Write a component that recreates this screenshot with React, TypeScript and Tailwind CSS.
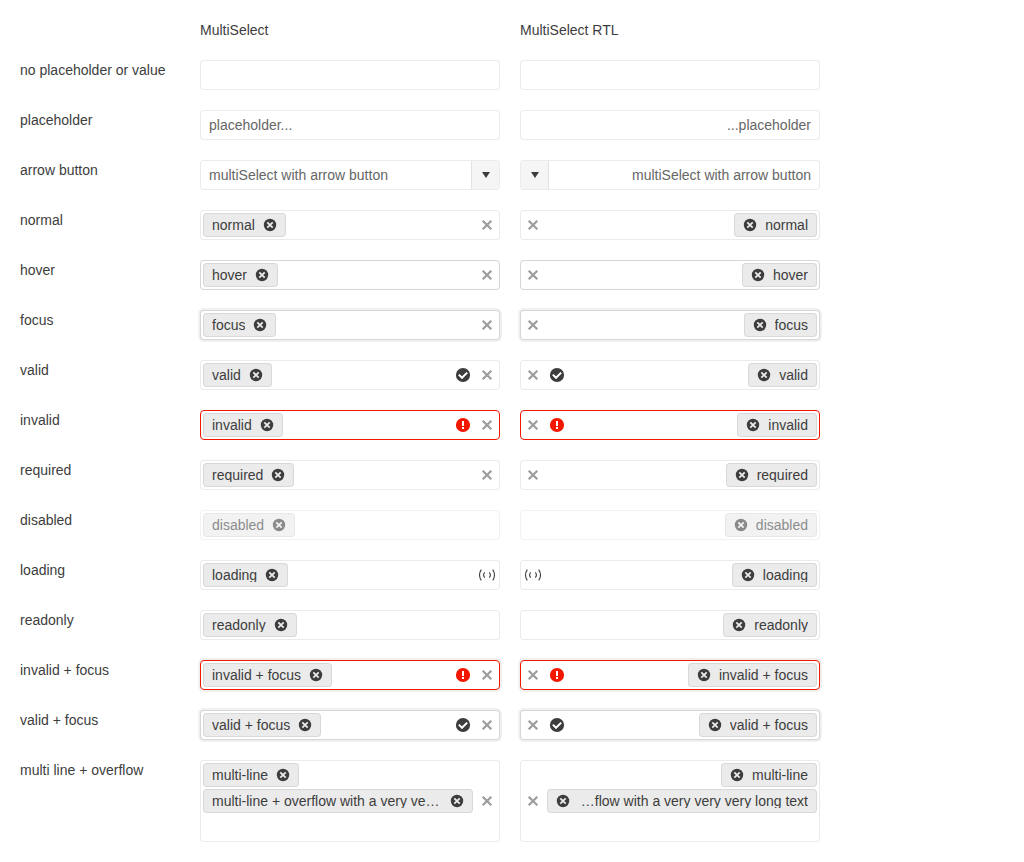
import React from "react";

type Status = "valid" | "invalid";

interface RowSpec {
  label: string;
  chips?: string[];
  placeholder?: string;
  arrow?: boolean;
  hover?: boolean;
  focus?: boolean;
  status?: Status;
  clear?: boolean;
  disabled?: boolean;
  loading?: boolean;
  readOnly?: boolean;
  required?: boolean;
}

const rows: RowSpec[] = [
  { label: "no placeholder or value" },
  { label: "placeholder", placeholder: "placeholder..." },
  { label: "arrow button", placeholder: "multiSelect with arrow button", arrow: true },
  { label: "normal", chips: ["normal"], clear: true },
  { label: "hover", chips: ["hover"], clear: true, hover: true },
  { label: "focus", chips: ["focus"], clear: true, focus: true },
  { label: "valid", chips: ["valid"], clear: true, status: "valid" },
  { label: "invalid", chips: ["invalid"], clear: true, status: "invalid" },
  { label: "required", chips: ["required"], clear: true, required: true },
  { label: "disabled", chips: ["disabled"], disabled: true },
  { label: "loading", chips: ["loading"], loading: true },
  { label: "readonly", chips: ["readonly"], readOnly: true },
  { label: "invalid + focus", chips: ["invalid + focus"], clear: true, status: "invalid", focus: true },
  { label: "valid + focus", chips: ["valid + focus"], clear: true, status: "valid", focus: true },
  {
    label: "multi line + overflow",
    chips: ["multi-line", "multi-line + overflow with a very very very long text"],
    clear: true,
  },
];

function RemoveIcon() {
  return (
    <svg viewBox="0 0 16 16" className="size-4" aria-hidden="true">
      <circle cx="8" cy="8" r="6.2" fill="currentColor" />
      <path d="M5.3 5.3l5.4 5.4M10.7 5.3l-5.4 5.4" stroke="#ebebeb" strokeWidth="1.8" />
    </svg>
  );
}

function ClearIcon() {
  return (
    <svg viewBox="0 0 16 16" className="size-4" aria-hidden="true">
      <path d="M3.7 3.7l8.6 8.6M12.3 3.7l-8.6 8.6" stroke="currentColor" strokeWidth="2.3" />
    </svg>
  );
}

function StatusIcon({ status }: { status: Status }) {
  return (
    <svg viewBox="0 0 16 16" className="size-4" role="img" aria-label={status}>
      <circle cx="8" cy="8" r="7.1" fill="currentColor" />
      {status === "valid" ? (
        <path d="M3.8 7.6l3.2 3.2 5.2-5.2" fill="none" stroke="#fff" strokeWidth="2" />
      ) : (
        <path d="M7 4h2v5H7zM7 10h2v2H7z" fill="#fff" />
      )}
    </svg>
  );
}

function LoadingIcon() {
  return (
    <svg
      viewBox="0 0 18 16"
      className="h-4 w-[18px]"
      fill="none"
      stroke="currentColor"
      role="img"
      aria-label="loading"
    >
      <path d="M3.3 2.6Q-.3 8 3.3 13.4M14.7 2.6q3.6 5.4 0 10.8" strokeWidth="1.1" />
      <path d="M6.7 5.4q-2.2 2.6 0 5.2M11.3 5.4q2.2 2.6 0 5.2" strokeWidth="1.1" />
    </svg>
  );
}

function Chip({ text, disabled }: { text: string; disabled?: boolean }) {
  return (
    <span className="flex h-6 max-w-full items-center gap-[7px] rounded border border-black/8 bg-[#ebebeb] ps-2 pe-[7px]">
      <span className="min-w-0 flex-1 truncate leading-[14px]">{text}</span>
      <button type="button" aria-label={`Remove ${text}`} disabled={disabled} className="shrink-0">
        <RemoveIcon />
      </button>
    </span>
  );
}

function borderClass({ status, hover, focus }: RowSpec) {
  if (status === "invalid") return "border-[#f31700]";
  return hover || focus ? "border-black/16" : "border-black/8";
}

function MultiSelect({ row, id, dir }: { row: RowSpec; id: string; dir: "ltr" | "rtl" }) {
  const { chips, status } = row;
  return (
    <div
      dir={dir}
      className={`flex min-h-[30px] min-w-0 items-stretch overflow-hidden rounded border bg-white ${borderClass(row)} ${
        row.focus ? "shadow-[0_0_0_2px_rgba(0,0,0,0.06)]" : ""
      } ${row.disabled ? "opacity-60" : ""}`}
    >
      <div className={`flex min-w-0 flex-1 flex-wrap gap-[2px] ${chips ? "p-[2px]" : "px-2"}`}>
        {chips?.map((text) => (
          <Chip key={text} text={text} disabled={row.disabled} />
        ))}
        <input
          id={id}
          type="text"
          aria-label={`${row.label} ${dir}`}
          placeholder={row.placeholder}
          disabled={row.disabled}
          readOnly={row.readOnly}
          required={row.required}
          className={`min-w-10 flex-1 bg-transparent outline-none placeholder:text-[#666666] placeholder:opacity-100 ${
            chips ? "h-6" : "h-7"
          }`}
        />
      </div>
      {status && (
        <span
          className={`flex w-6 shrink-0 items-center justify-center ${status === "invalid" ? "text-[#f31700]" : ""}`}
        >
          <StatusIcon status={status} />
        </span>
      )}
      {row.clear && (
        <button
          type="button"
          aria-label="Clear"
          className="flex w-6 shrink-0 items-center justify-center text-[#9e9e9e]"
        >
          <ClearIcon />
        </button>
      )}
      {row.loading && (
        <span className="flex w-6 shrink-0 items-center justify-center">
          <LoadingIcon />
        </span>
      )}
      {row.arrow && (
        <button
          type="button"
          aria-label="Open list"
          className="flex w-7 shrink-0 items-center justify-center border-s border-black/8 bg-[#f5f5f5]"
        >
          <svg viewBox="0 0 16 16" className="size-4" aria-hidden="true">
            <path d="M4 5h8l-4 6z" fill="currentColor" />
          </svg>
        </button>
      )}
    </div>
  );
}

export default function App() {
  return (
    <main className="grid grid-cols-[160px_minmax(0,300px)_minmax(0,300px)] gap-5 bg-white p-5 font-['Liberation_Sans',Arial,sans-serif] text-sm leading-5 text-[#3d3d3d]">
      <h2 className="col-start-2">MultiSelect</h2>
      <h2>MultiSelect RTL</h2>
      {rows.map((row, index) => (
        <React.Fragment key={row.label}>
          <label htmlFor={`multiselect-${index}`}>{row.label}</label>
          <MultiSelect row={row} id={`multiselect-${index}`} dir="ltr" />
          <MultiSelect row={row} id={`multiselect-${index}-rtl`} dir="rtl" />
        </React.Fragment>
      ))}
    </main>
  );
}
